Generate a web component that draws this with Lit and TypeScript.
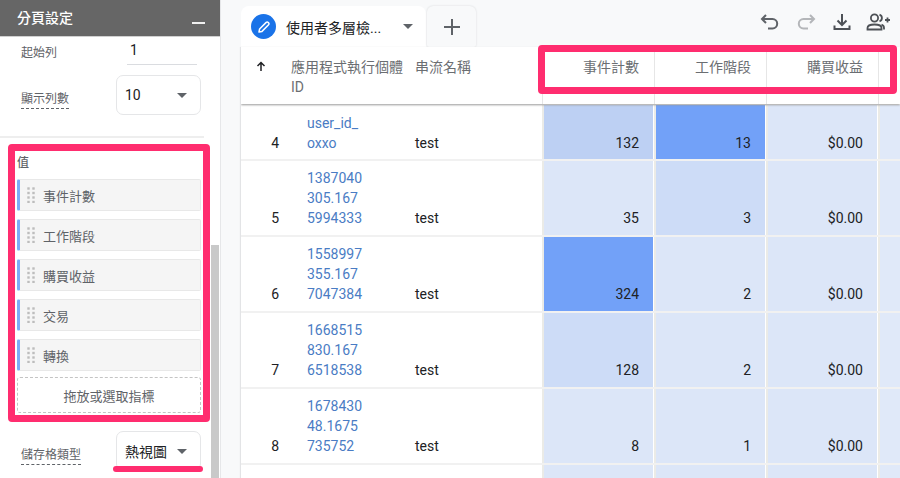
import { LitElement, html, css, svg } from "lit";
import { customElement } from "lit/decorators.js";

const rows = [
  { n: "4", id: ["user_id_", "oxxo"], s: "test", a: ["132", "#bdd0f3"], b: ["13", "#72a1f8"] },
  { n: "5", id: ["1387040", "305.167", "5994333"], s: "test", a: ["35", "#dce6f8"], b: ["3", "#cddcf7"] },
  { n: "6", id: ["1558997", "355.167", "7047384"], s: "test", a: ["324", "#72a1f8"], b: ["2", "#dce6f8"] },
  { n: "7", id: ["1668515", "830.167", "6518538"], s: "test", a: ["128", "#cddcf7"], b: ["2", "#dce6f8"] },
  { n: "8", id: ["1678430", "48.1675", "735752"], s: "test", a: ["8", "#dce6f8"], b: ["1", "#dce6f8"] },
  { n: "", id: ["", "", ""], s: "", a: ["", "#dce6f8"], b: ["", "#dce6f8"] },
];
const chips = ["事件計數", "工作階段", "購買收益", "交易", "轉換"];

const icon = (body: unknown, size = 24) => html`<svg width=${size} height=${size} viewBox="0 0 24 24">${body}</svg>`;
const caret = html`<svg class="caret" width="10" height="5" viewBox="0 0 10 5"><path d="M0 0h10L5 5z" fill="#5f6368"/></svg>`;
const grip = html`<svg class="grip" width="8" height="16" viewBox="0 0 8 16" fill="#bdbdbd">
  ${[1.5, 6.5].map((x) => [1.5, 6, 10.5, 15].map((y) => svg`<rect x=${x - 1.2} y=${y - 1.2} width="2.4" height="2.4"/>`))}
</svg>`;

@customElement("app-root")
export class AppRoot extends LitElement {
  static styles = css`
    :host { display: block; width: 900px; height: 478px; overflow: hidden; position: relative; background: #f8f9fa;
      font-family: Roboto, "Noto Sans CJK TC", sans-serif; color: #202124; font-size: 14px; }
    .page { display: flex; height: 478px; }
    .side { width: 221px; flex: none; background: #fff; position: relative; border-right: 1px solid #e6e7e9; box-sizing: border-box; }
    .head { height: 37px; background: #666; color: #fff; font-weight: 500; font-size: 14px; display: flex; justify-content: space-between; align-items: center; padding: 0 17px 3px 17px; box-sizing: border-box; border-bottom: 1px solid #d0d0d0; }
    .dash { width: 13px; height: 2px; background: #f0f0f0; margin-top: 12px; margin-right: -2px; }
    .track { position: absolute; left: 211px; top: 245px; bottom: 0; width: 8px; background: #c9c9c9; }
    .field { display: flex; align-items: center; font-size: 12px; color: #5f6368; }
    .start { padding: 0 0 0 21px; height: 28px; box-sizing: border-box; }
    .start span { width: 106px; }
    .start b { font-weight: 400; font-size: 14px; color: #202124; width: 70px; height: 27px; line-height: 25px; padding-left: 3px; border-bottom: 1px solid #dadce0; box-sizing: border-box; }
    .rowsel { padding: 10px 19px 0 21px; justify-content: space-between; }
    .dashed { border-bottom: 1px dashed #5f6368; line-height: 17px; margin-top: 9px; }
    .sel { width: 85px; height: 40px; box-sizing: border-box; border: 1px solid #e5e6e8; border-radius: 7px; display: flex; align-items: center; justify-content: space-between; padding: 0 13px 0 8px; color: #202124; font-size: 14px; }
    .rule { height: 2px; background: #eee; width: 204px; margin-top: 21px; }
    .values { padding: 16px 0 0 17px; width: 184px; }
    .values h4 { margin: 0 0 7px; font-size: 12px; line-height: 18px; font-weight: 500; color: #5f6368; }
    .chips { display: flex; flex-direction: column; gap: 8px; }
    .chip { height: 32px; box-sizing: border-box; background: #f5f5f5; border: 1px solid #e8e8e8; border-left: 3px solid #7baaf7; border-radius: 2px; display: flex; align-items: center; gap: 8px; padding-left: 7px; font-size: 13px; color: #5f6368; }
    .drop { height: 36px; margin-top: 6px; box-sizing: border-box; border: 1px dashed #c4c4c4; border-radius: 3px; display: flex; align-items: center; justify-content: center; font-size: 13px; color: #5f6368; }
    .cell { padding: 18px 19px 0 21px; justify-content: space-between; }
    .gutter { width: 20px; flex: none; }
    .main { flex: 1; min-width: 0; display: flex; flex-direction: column; }
    .tabs { height: 47px; flex: none; display: flex; align-items: flex-end; }
    .tab { width: 185px; height: 41px; background: #fff; border-radius: 8px 8px 0 0; display: flex; align-items: center; padding: 0 13px 0 10px; box-sizing: border-box; gap: 10px; font-size: 14px; }
    .pen { width: 25px; height: 25px; border-radius: 50%; background: #1a73e8; display: flex; align-items: center; justify-content: center; flex: none; }
    .tabname { flex: 1; white-space: nowrap; }
    .add { width: 49px; height: 41px; margin-left: 1px; background: #f8f9fa; border-radius: 6px 6px 2px 2px; box-shadow: 0 0 2px #d5d6d8; display: flex; align-items: center; justify-content: center; }
    .tools { margin-left: auto; align-self: center; display: flex; gap: 12px; padding: 0 10px 4px 0; }
    .tools svg { display: block; }
    .card { flex: 1; background: #fff; box-shadow: -1px 0 1px #e3e4e6; overflow: hidden; display: flex; flex-direction: column; }
    .thead { height: 57px; flex: none; display: grid; grid-template-columns: 50px 124px 127px repeat(4, 112px); box-shadow: 0 1px 2px #9a9a9a; position: relative; margin-bottom: 1px; color: #6b6e72; line-height: 20px; background: #fff; }
    .arrow { padding-left: 14px; }
    .arrow svg { margin-top: 3px; }
    .thead > div { padding-top: 10px; }
    .thead .th { padding-right: 15px; box-sizing: border-box; text-align: right; border-left: 1px solid #e6e6e6; }
    .thead .last { border-left: 1px solid #e6e6e6; }
    .tr { display: grid; grid-template-columns: 50px 124px 127px repeat(4, 112px); margin-bottom: 2px; background: #fff; box-shadow: 0 2px 0 #f1f1f1; line-height: 20px; }
    .tr > div { padding: 7px 0 7px; display: flex; align-items: flex-end; }
    .thead + .tr > div { padding: 8px 0 6px; }
    .tr .num, .thead + .tr > .num { justify-content: flex-end; padding-right: 12px; }
    .id { padding-left: 16px !important; color: #4a7cc4; flex-direction: column; align-items: flex-start !important; justify-content: flex-end; white-space: nowrap; }
    .id span { display: block; height: 20px; }
    .stream { padding-left: 0; }
    .tr .heat, .thead + .tr > .heat { justify-content: flex-end; padding-right: 14px; box-sizing: border-box; border-left: 2px solid #ebebe7; border-right: 1px solid #fff; }
    .mark { position: absolute; border: 7px solid #ff2d6f; border-radius: 4px; box-sizing: border-box; pointer-events: none; }
    .m1 { left: 8px; top: 144px; width: 202px; height: 278px; }
    .m2 { left: 538px; top: 45px; width: 359px; height: 49px; }
    .m3 { left: 113px; top: 466px; width: 90px; height: 6px; background: #ff2d6f; border: 0; border-radius: 3px; }
  `;

  render() {
    return html`
      <div class="page">
        <aside class="side">
          <div class="track"></div>
          <div class="head"><span>分頁設定</span><span class="dash"></span></div>
          <div class="field start"><span>起始列</span><b>1</b></div>
          <div class="field rowsel"><span class="dashed">顯示列數</span><div class="sel"><span>10</span>${caret}</div></div>
          <div class="rule"></div>
          <div class="values">
            <h4>值</h4>
            <div class="chips">${chips.map((c) => html`<div class="chip">${grip}<span>${c}</span></div>`)}</div>
            <div class="drop">拖放或選取指標</div>
          </div>
          <div class="field cell"><span class="dashed">儲存格類型</span><div class="sel"><span>熱視圖</span>${caret}</div></div>
        </aside>
        <div class="gutter"></div>
        <main class="main">
          <div class="tabs">
            <div class="tab">
              <div class="pen"><svg width="14" height="14" viewBox="0 0 14 14"><path d="M2 12l.6-3 6.6-6.6a1.3 1.3 0 0 1 1.9 0l.5.5a1.3 1.3 0 0 1 0 1.9L5 11.400z" fill="none" stroke="#fff" stroke-width="1.500" stroke-linejoin="round"/></svg></div>
              <span class="tabname">使用者多層檢...</span>${caret}
            </div>
            <div class="add">${icon(svg`<path d="M11 4h2v7h7v2h-7v7h-2v-7H4v-2h7z" fill="#5f6368"/>`, 24)}</div>
            <div class="tools">
              ${icon(svg`<path d="M8 5L4 9l4 4M4.500 9H14.500a4.700 4.700 0 0 1 0 9.400H10" fill="none" stroke="#5f6368" stroke-width="2"/>`)}
              ${icon(svg`<path d="M16 5l4 4-4 4M19.500 9H9.500a4.700 4.700 0 0 0 0 9.400H14" fill="none" stroke="#b4b6b9" stroke-width="2"/>`)}
              ${icon(svg`<path d="M12 4v11M7.500 10.500L12 15l4.500-4.500M4.500 15.500v3.500h15v-3.500" fill="none" stroke="#4d5156" stroke-width="2"/>`)}
              ${icon(svg`<g fill="none" stroke="#4d5156" stroke-width="1.800"><circle cx="8.500" cy="8" r="3.600"/><path d="M1.500 19.500v-1.500c0-2.300 3.500-3.500 7-3.500s7 1.200 7 3.500v1.500z"/><path d="M13.500 4.600a3.600 3.600 0 0 1 0 6.800M15.500 14.700c1.600.6 2.500 1.700 2.500 3.300v1.500M21.500 7.500v5M19 10h5"/></g>`)}
            </div>
          </div>
          <div class="card">
            <div class="thead">
              <div class="arrow"><svg width="12" height="12" viewBox="0 0 12 12"><path d="M6 11V3M2.500 6L6 2.500 9.500 6" fill="none" stroke="#202124" stroke-width="1.500"/></svg></div>
              <div>應用程式執行個體<br />ID</div>
              <div>串流名稱</div>
              <div class="th">事件計數</div>
              <div class="th">工作階段</div>
              <div class="th">購買收益</div>
              <div class="last"></div>
            </div>
            ${rows.map((r) => html`
              <div class="tr">
                <div class="num">${r.n}</div>
                <div class="id">${r.id.map((t) => html`<span>${t}</span>`)}</div>
                <div class="stream">${r.s}</div>
                <div class="heat" style="background:${r.a[1]}">${r.a[0]}</div>
                <div class="heat" style="background:${r.b[1]}">${r.b[0]}</div>
                <div class="heat" style="background:#dce6f8">${r.n ? "$0.00" : ""}</div>
                <div class="heat" style="background:#e0e9f9"></div>
              </div>`)}
          </div>
        </main>
      </div>
      <div class="mark m1"></div>
      <div class="mark m2"></div>
      <div class="mark m3"></div>
    `;
  }
}
